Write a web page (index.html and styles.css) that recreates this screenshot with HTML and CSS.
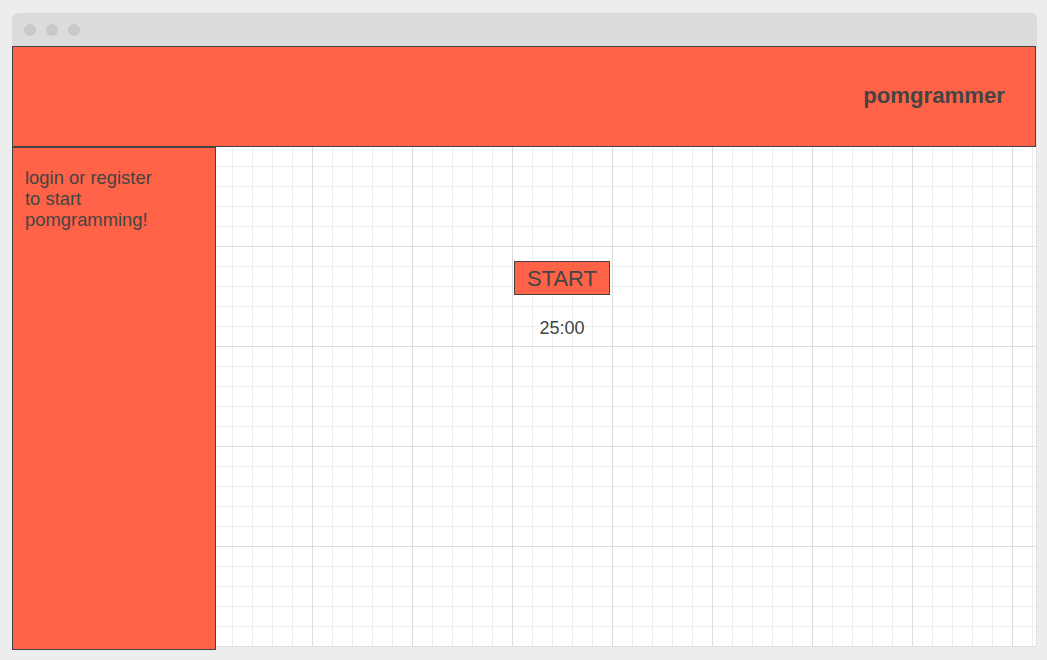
FILE: index.html
```html
<!DOCTYPE html>
<html>
<head>
<meta charset="utf-8">
<link rel="stylesheet" href="styles.css">
</head>
<body>
<div class="window">
  <div class="titlebar">
    <span class="dot"></span><span class="dot"></span><span class="dot"></span>
  </div>
  <div class="viewport">
    <header class="header"><h1 class="brand">pomgrammer</h1></header>
    <aside class="sidebar"><p class="hint">login or register<br>to start<br>pomgramming!</p></aside>
    <main class="main">
      <div class="timer">
        <button class="start">START</button>
        <div class="time">25:00</div>
      </div>
    </main>
  </div>
</div>
</body>
</html>
```
FILE: styles.css
```css
html, body { margin: 0; padding: 0; }
body {
  background: #ededed;
  font-family: "Liberation Sans", Arial, sans-serif;
  color: #444;
  width: 1047px;
  height: 660px;
  overflow: hidden;
}
.window {
  margin: 13px 0 0 12px;
  width: 1025px;
}
.titlebar {
  height: 33px;
  background: #dcdcdc;
  border-radius: 6px 6px 0 0;
  display: flex;
  align-items: center;
  gap: 10px;
  padding-left: 12px;
  box-sizing: border-box;
}
.dot {
  width: 12px;
  height: 12px;
  border-radius: 50%;
  background: #c9c9c9;
}
.viewport {
  width: 1024px;
  height: 600px;
  border-right: 1px solid #e0e0e0;
  border-bottom: 1px solid #e0e0e0;
  margin-bottom: -1px;
  background-color: #fff;
  background-image:
    linear-gradient(to right, #dcdcdc 1px, transparent 1px),
    linear-gradient(to bottom, #dcdcdc 1px, transparent 1px),
    linear-gradient(to right, #ededed 1px, transparent 1px),
    linear-gradient(to bottom, #ededed 1px, transparent 1px);
  background-size: 100px 100px, 100px 100px, 20px 20px, 20px 20px;
  display: grid;
  grid-template-columns: 204px 1fr;
  grid-template-rows: 101px 503px;
}
.header {
  grid-column: 1 / 3;
  background: #ff6347;
  border: 1px solid #444;
  display: flex;
  align-items: center;
  justify-content: flex-end;
  padding-right: 30px;
  padding-bottom: 2px;
}
.brand {
  margin: 0;
  font-size: 22.2px;
  font-weight: bold;
  color: #444;
}
.sidebar {
  background: #ff6347;
  border: 1px solid #444;
  padding: 0 12px;
}
.hint {
  margin: 19px 0;
  font-size: 18.4px;
  line-height: 21px;
}
.main {
  display: flex;
  justify-content: center;
  padding-right: 128px;
  padding-top: 114px;
}
.timer {
  display: flex;
  flex-direction: column;
  align-items: center;
  gap: 23px;
}
.start {
  background: #ff6347;
  border: 1px solid #444;
  color: #444;
  font-family: "Liberation Sans", Arial, sans-serif;
  font-size: 22px;
  width: 96px;
  height: 34px;
  padding: 2px 0 0;
  margin: 0;
}
.time {
  font-size: 18px;
  line-height: 20px;
}
```
